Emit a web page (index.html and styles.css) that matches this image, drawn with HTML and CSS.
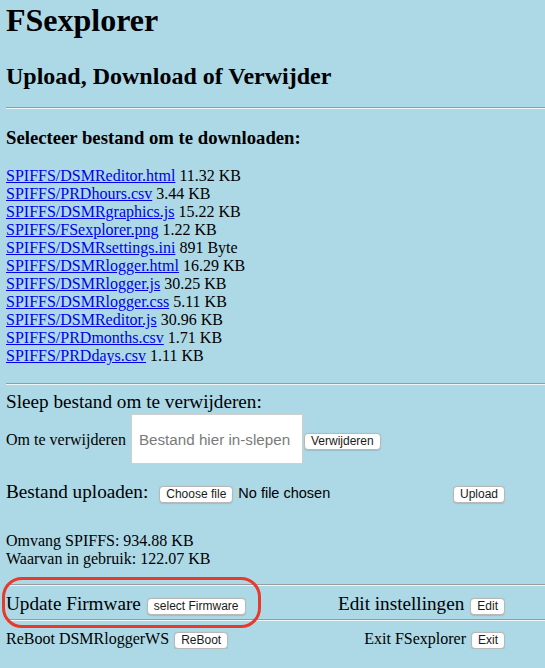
FILE: index.html
```html
<!DOCTYPE html>
<html>
<head>
<meta charset="utf-8">
<title>FSexplorer</title>
<link rel="stylesheet" href="styles.css">
</head>
<body>
<h1 class="title">FSexplorer</h1>
<h2 class="subtitle">Upload, Download of Verwijder</h2>
<hr class="rule rule-top">
<h3 class="section-head">Selecteer bestand om te downloaden:</h3>
<div class="file-list">
  <div class="file"><a href="#">SPIFFS/DSMReditor.html</a> 11.32 KB</div>
  <div class="file"><a href="#">SPIFFS/PRDhours.csv</a> 3.44 KB</div>
  <div class="file"><a href="#">SPIFFS/DSMRgraphics.js</a> 15.22 KB</div>
  <div class="file"><a href="#">SPIFFS/FSexplorer.png</a> 1.22 KB</div>
  <div class="file"><a href="#">SPIFFS/DSMRsettings.ini</a> 891 Byte</div>
  <div class="file"><a href="#">SPIFFS/DSMRlogger.html</a> 16.29 KB</div>
  <div class="file"><a href="#">SPIFFS/DSMRlogger.js</a> 30.25 KB</div>
  <div class="file"><a href="#">SPIFFS/DSMRlogger.css</a> 5.11 KB</div>
  <div class="file"><a href="#">SPIFFS/DSMReditor.js</a> 30.96 KB</div>
  <div class="file"><a href="#">SPIFFS/PRDmonths.csv</a> 1.71 KB</div>
  <div class="file"><a href="#">SPIFFS/PRDdays.csv</a> 1.11 KB</div>
</div>
<hr class="rule rule-list">
<div class="big-line sleep">Sleep bestand om te verwijderen:</div>
<div class="row delete-row">
  <span class="label">Om te verwijderen</span>
  <input class="drop" type="text" placeholder="Bestand hier in-slepen">
  <button class="btn btn-del">Verwijderen</button>
</div>
<div class="row upload-row">
  <span class="big-label">Bestand uploaden:</span>
  <button class="btn btn-choose">Choose file</button>
  <span class="nofile">No file chosen</span>
  <button class="btn btn-upload">Upload</button>
</div>
<div class="info">
  <div>Omvang SPIFFS: 934.88 KB</div>
  <div>Waarvan in gebruik: 122.07 KB</div>
</div>
<hr class="rule rule-info">
<div class="row action-row firmware-row">
  <div class="group">
    <span class="big-label">Update Firmware</span>
    <button class="btn">select Firmware</button>
  </div>
  <div class="group">
    <span class="big-label">Edit instellingen</span>
    <button class="btn">Edit</button>
  </div>
  <div class="highlight"></div>
</div>
<hr class="rule rule-mid">
<div class="row action-row small-row">
  <div class="group group-small">
    <span class="label">ReBoot DSMRloggerWS</span>
    <button class="btn">ReBoot</button>
  </div>
  <div class="group group-small">
    <span class="label">Exit FSexplorer</span>
    <button class="btn">Exit</button>
  </div>
</div>
</body>
</html>
```

FILE: styles.css
```css
html {
  background: #add8e6;
}
body {
  margin: 0;
  padding: 0 0 0 6px;
  background: #add8e6;
  font-family: "Liberation Serif", "Times New Roman", serif;
  font-size: 16px;
  color: #000;
}
.title {
  font-size: 32px;
  line-height: 36px;
  margin: 2px 0 0;
}
.subtitle {
  font-size: 24px;
  line-height: 28px;
  margin: 24px 0 0;
}
.rule {
  border: 0;
  border-top: 1px solid #9a9a9a;
  border-bottom: 1px solid #eef6f8;
  height: 0;
  margin: 0;
}
.rule-top { margin-top: 17px; }
.section-head {
  font-size: 18.72px;
  line-height: 22px;
  margin: 18px 0 0;
}
.file-list {
  margin-top: 18px;
  line-height: 18px;
}
.file a {
  color: #0000ee;
  text-decoration: underline;
}
.rule-list { margin-top: 18px; }
.big-line {
  font-size: 19.2px;
  line-height: 23px;
}
.sleep { margin-top: 5px; }
.row {
  display: flex;
  align-items: baseline;
  width: 499px;
}
.label {
  font-size: 16px;
  line-height: 18px;
}
.big-label {
  font-size: 19.2px;
  line-height: 23px;
}
.delete-row {
  margin-top: 1px;
}
.drop {
  box-sizing: border-box;
  width: 172px;
  height: 50px;
  margin: 0 1px 0 5px;
  padding: 0 7px;
  border: 1px solid #cfcfcf;
  border-radius: 0;
  background: #fff;
  font-family: "Liberation Sans", Arial, sans-serif;
  font-size: 15.2px;
  color: #333;
  outline: none;
}
.drop::placeholder {
  color: #7a7a7a;
}
.btn {
  box-sizing: border-box;
  height: 17px;
  padding: 0 6px;
  border: 1px solid #b8b8b8;
  border-radius: 4px;
  background: #fff;
  font-family: "Liberation Sans", Arial, sans-serif;
  font-size: 12px;
  line-height: 15px;
  color: #1a1a1a;
  box-shadow: 0 0.5px 1px rgba(0, 0, 0, 0.12);
}
.upload-row {
  margin-top: 16px;
}
.btn-choose {
  margin-left: 11px;
}
.nofile {
  margin-left: 5px;
  font-family: "Liberation Sans", Arial, sans-serif;
  font-size: 14.5px;
}
.btn-upload {
  margin-left: auto;
}
.info {
  margin-top: 29px;
  line-height: 18px;
}
.rule-info { margin-top: 16px; }
.action-row {
  justify-content: space-between;
}
.group {
  display: flex;
  align-items: baseline;
  gap: 6px;
}
.group-small {
  gap: 5px;
}
.firmware-row {
  position: relative;
  margin-top: 6px;
}
.highlight {
  position: absolute;
  left: -4px;
  top: -15px;
  width: 259px;
  height: 51px;
  box-sizing: border-box;
  border: 3px solid #e8392d;
  border-radius: 20px;
  pointer-events: none;
}
.rule-mid { margin-top: 4px; }
.small-row {
  margin-top: 9px;
}
```
